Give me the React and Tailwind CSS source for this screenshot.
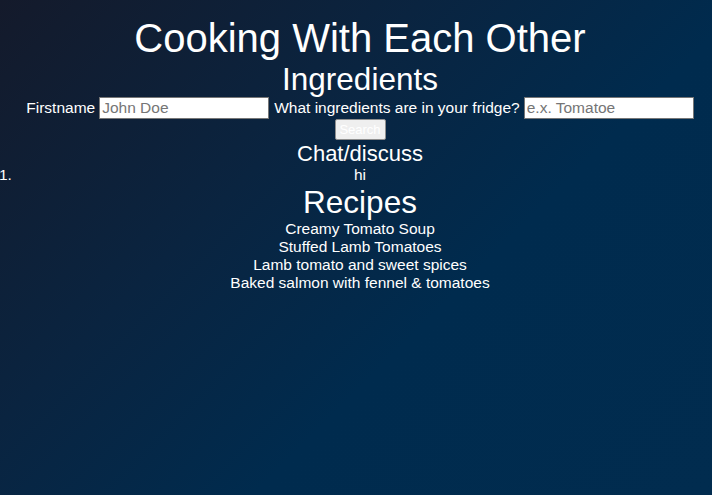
export default function App() {
  const recipes = [
    "Creamy Tomato Soup",
    "Stuffed Lamb Tomatoes",
    "Lamb tomato and sweet spices",
    "Baked salmon with fennel & tomatoes",
  ];
  return (
    <div
      className="w-full min-h-[495px] pl-[8px] text-white text-center bg-[linear-gradient(135deg,#141a2b_0%,#0a2440_35%,#002b4e_62%,#012c4f_100%)]"
      style={{ fontFamily: '"Liberation Sans", Arial, sans-serif' }}
    >
      <h1 className="pt-[15px] text-[40px] leading-[46px] font-normal">Cooking With Each Other</h1>
      <h2 className="mt-[1px] text-[31.5px] leading-[34px] font-normal">Ingredients</h2>
      <form className="mt-[1px] flex items-center justify-center gap-[4px] text-[15.5px] leading-[22px]">
        <label>Firstname</label>
        <input
          className="w-[170px] h-[22px] bg-white border border-[#767676] px-[2px] text-[15.5px] text-black placeholder:text-[#757575]"
          placeholder="John Doe"
        />
        <label className="ml-[1px]">What ingredients are in your fridge?</label>
        <input
          className="w-[170px] h-[22px] bg-white border border-[#767676] px-[2px] text-[15.5px] text-black placeholder:text-[#757575]"
          placeholder="e.x. Tomatoe"
        />
      </form>
      <div className="flex justify-center">
        <button className="w-[51px] h-[21px] bg-[#efefef] border border-[#8f8f8f] rounded-[2px] text-[13px] leading-[19px] text-white">
          Search
        </button>
      </div>
      <h3 className="mt-[3px] text-[22px] leading-[22px] font-normal">Chat/discuss</h3>
      <div className="relative -ml-[8px] pl-[8px] text-[15.5px] leading-[14px] mt-[3px]">
        <span className="absolute left-[-1px] top-0">1.</span>
        <span>hi</span>
      </div>
      <h2 className="mt-[3px] text-[31.5px] leading-[34px] font-normal">Recipes</h2>
      <div className="mt-[1px] text-[15.5px] leading-[18px]">
        {recipes.map((r) => (
          <div key={r}>{r}</div>
        ))}
      </div>
    </div>
  );
}
